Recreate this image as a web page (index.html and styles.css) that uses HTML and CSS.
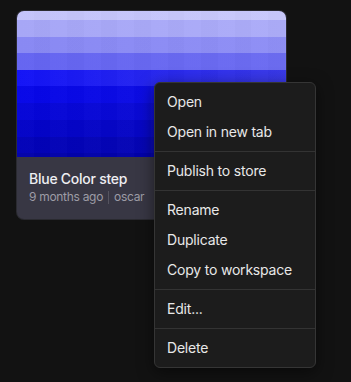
FILE: index.html
```html
<!DOCTYPE html>
<html>
<head>
<meta charset="utf-8">
<link rel="stylesheet" href="styles.css">
</head>
<body>
<div class="page">
  <div class="card">
    <div class="thumb">
      <div class="row r0"></div>
      <div class="row r1"></div>
      <div class="row r2"></div>
      <div class="row r3"></div>
      <div class="row r4"></div>
      <div class="row r5"></div>
      <div class="row r6"></div>
      <div class="row r7"></div>
      <div class="row r8"></div>
      <div class="row r9"></div>
    </div>
    <div class="info">
      <div class="title">Blue Color step</div>
      <div class="meta"><span>9 months ago</span><span class="sep"></span><span>oscar</span></div>
    </div>
  </div>
  <div class="menu">
    <div class="item">Open</div>
    <div class="item">Open in new tab</div>
    <div class="divider"></div>
    <div class="item">Publish to store</div>
    <div class="divider"></div>
    <div class="item">Rename</div>
    <div class="item">Duplicate</div>
    <div class="item">Copy to workspace</div>
    <div class="divider"></div>
    <div class="item">Edit...</div>
    <div class="divider"></div>
    <div class="item">Delete</div>
  </div>
</div>
</body>
</html>
```
FILE: styles.css
```css
html, body {
  margin: 0;
  padding: 0;
  background: #121212;
  font-family: Inter, "Noto Sans", sans-serif;
}
.page {
  position: relative;
  width: 351px;
  height: 382px;
  padding: 11px 0 0 17px;
  box-sizing: border-box;
}
.card {
  width: 269px;
  border-radius: 7px;
  overflow: hidden;
  background: #383744;
  box-shadow: 0 0 0 1px #2a2a30;
}
.thumb {
  display: flex;
  flex-direction: column;
  height: 146px;
  position: relative;
}
.thumb::after {
  content: "";
  position: absolute;
  inset: 0;
  background: repeating-linear-gradient(to right, rgba(255,255,255,0.012) 0 16.75px, rgba(0,0,0,0.012) 16.75px 33.5px);
}
.row { flex: none; }
.r0 { height: 9px;  background: linear-gradient(to right, #c3c3fa, #c8c8fb); }
.r1 { height: 17px; background: linear-gradient(to right, #a6a6f6, #acacf8); }
.r2 { height: 16px; background: linear-gradient(to right, #8888f3, #8f8ff5); }
.r3 { height: 17px; background: linear-gradient(to right, #6464f1, #6c6cf1); }
.r4 { height: 16px; background: linear-gradient(to right, #1212f6, #3a3ae8); }
.r5 { height: 17px; background: linear-gradient(to right, #0606e8, #1414e0); }
.r6 { height: 17px; background: linear-gradient(to right, #0505d8, #1010d2); }
.r7 { height: 17px; background: linear-gradient(to right, #0303c8, #0c0cc2); }
.r8 { height: 16px; background: linear-gradient(to right, #0202b8, #0a0ab2); }
.r9 { height: 4px;  background: #0202aa; }
.info {
  height: 62px;
  padding: 13px 12px 0 12px;
  box-sizing: border-box;
}
.title {
  color: #eeeef2;
  font-size: 14px;
  font-weight: 500;
  line-height: 18px;
  letter-spacing: -0.25px;
}
.meta {
  display: flex;
  align-items: center;
  margin-top: 1px;
  color: #9d9ca6;
  font-size: 12px;
  line-height: 16px;
  letter-spacing: -0.3px;
}
.sep {
  width: 1px;
  height: 13px;
  background: #55545f;
  margin: 0 5px;
}
.menu {
  position: absolute;
  left: 154px;
  top: 82px;
  width: 162px;
  box-sizing: border-box;
  padding: 4px 0;
  background: #1c1c1c;
  border: 1px solid #353535;
  border-radius: 6px;
  box-shadow: 0 4px 16px rgba(0,0,0,0.5);
}
.item {
  height: 30px;
  line-height: 30px;
  padding: 0 12px;
  color: #e8e8e8;
  font-size: 14px;
  letter-spacing: -0.2px;
}
.divider {
  height: 1px;
  background: #333333;
  margin: 4px 0;
}
```
